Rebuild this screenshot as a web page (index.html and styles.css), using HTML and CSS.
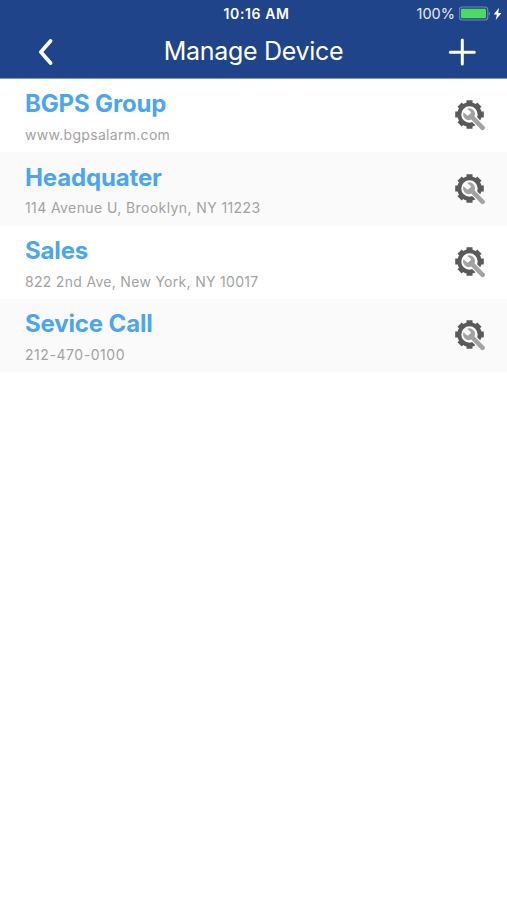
FILE: index.html
```html
<!DOCTYPE html>
<html lang="en">
<head>
  <meta charset="UTF-8">
  <title>Manage Device</title>
  <link rel="stylesheet" href="styles.css">
</head>
<body>
  <!-- shared gear + wrench icon -->
  <svg class="defs" width="0" height="0">
    <symbol id="settings" viewBox="0 0 32 32">
      <circle cx="15.5" cy="15.5" r="10.2" fill="none" stroke="#5a5a5a" stroke-width="4"/>
      <g stroke="#5a5a5a" stroke-width="6" stroke-linejoin="round">
        <path d="M15.5 1.2v4M15.5 25.8v4M1.2 15.5h4M25.8 15.5h4"/>
        <path d="M5.6 5.6l2.8 2.8M22.6 22.6l2.8 2.8M5.6 25.4l2.8-2.8M22.6 8.4l2.8-2.8"/>
      </g>
      <path d="M19.5 19.5L30 30" stroke="#fff" stroke-width="6.8"/>
      <path d="M17 17L28.6 28.8" stroke="#a2a2a2" stroke-width="4.6" stroke-linecap="round"/>
      <path d="M13.1 9.7a5.7 5.7 0 0 1 7.4 7.5l-3.4 3.4a5.7 5.7 0 0 1-7.6-7.3l3.7 3.3 3.3-.5.4-3.1z" fill="#a2a2a2"/>
    </symbol>
  </svg>

  <header class="header">
    <div class="status">
      <span class="time">10:16 AM</span>
      <div class="power">
        <span class="percent">100%</span>
        <svg class="battery" width="33" height="16" viewBox="0 0 33 16">
          <rect x=".2" y="1" width="28.6" height="13" rx="3" fill="none" stroke="#7189b9" stroke-width="1.2"/>
          <rect x="1.8" y="2.8" width="25.2" height="9.5" rx="1.2" fill="#4cd964"/>
          <path d="M30 5.5q2 2.2 0 4.4z" fill="#7189b9"/>
        </svg>
        <svg class="bolt" width="9" height="14" viewBox="0 0 9 14">
          <path d="M6 .8L.7 7.6h3.1L2.7 13 8.4 6H5.2z" fill="#fff"/>
        </svg>
      </div>
    </div>
    <div class="navbar">
      <svg class="back" width="16" height="28" viewBox="0 0 16 28">
        <path d="M13.5 3L3.9 14l9.6 11" fill="none" stroke="#fff" stroke-width="3.7" stroke-linecap="round" stroke-linejoin="round"/>
      </svg>
      <h1 class="title">Manage Device</h1>
      <svg class="add" width="28" height="28" viewBox="0 0 28 28">
        <path d="M14.3 2v24M2.3 14.3h24" stroke="#fff" stroke-width="3" stroke-linecap="round"/>
      </svg>
    </div>
  </header>

  <ul class="devices">
    <li class="device">
      <div class="info">
        <h2 class="name">BGPS Group</h2>
        <p class="detail">www.bgpsalarm.com</p>
      </div>
      <svg class="settings"><use href="#settings"/></svg>
    </li>
    <li class="device">
      <div class="info">
        <h2 class="name">Headquater</h2>
        <p class="detail detail-wide">114 Avenue U, Brooklyn, NY 11223</p>
      </div>
      <svg class="settings"><use href="#settings"/></svg>
    </li>
    <li class="device">
      <div class="info">
        <h2 class="name">Sales</h2>
        <p class="detail">822 2nd Ave, New York, NY 10017</p>
      </div>
      <svg class="settings"><use href="#settings"/></svg>
    </li>
    <li class="device">
      <div class="info">
        <h2 class="name">Sevice Call</h2>
        <p class="detail detail-phone">212-470-0100</p>
      </div>
      <svg class="settings"><use href="#settings"/></svg>
    </li>
  </ul>
</body>
</html>
```

FILE: styles.css
```css
body {
  margin: 0;
  background-color: #fff;
  font-family: Inter, "Liberation Sans", sans-serif;
}

h1, h2, p, ul {
  margin: 0;
  padding: 0;
}

svg { display: block; }

.header {
  height: 78px;
  background-color: #1f4489;
  border-bottom: 1px solid #7f97c6;
  color: #fff;
}

.status {
  display: grid;
  grid-template-columns: 1fr auto 1fr;
  height: 27px;
  padding: 0 5px 0 11px;
  align-items: center;
}

.time {
  grid-column: 2;
  font-size: 14px;
  font-weight: 600;
  letter-spacing: 0.6px;
}

.power {
  display: flex;
  justify-content: flex-end;
  align-items: center;
}

.percent {
  font-size: 14.5px;
  margin-right: 4px;
  color: #e4eaf5;
}

.bolt { margin-left: 1px; }

.navbar {
  display: flex;
  justify-content: space-between;
  align-items: center;
  height: 50px;
  padding: 0 31px 0 37px;
}

.title {
  font-size: 25px;
  font-weight: 400;
  line-height: 30px;
  letter-spacing: -0.3px;
  padding: 0 0 3px 6px;
}

.devices { list-style: none; }

.device {
  display: flex;
  justify-content: space-between;
  height: 73.3px;
  padding: 0 21px 0 25px;
}

.device:nth-child(even) { background-color: #fafafa; }

.name {
  padding-top: 10.4px;
  font-size: 24px;
  font-weight: 650;
  line-height: 30px;
  letter-spacing: -0.15px;
  color: #4ba5ef;
}

.detail {
  padding-top: 5.6px;
  font-size: 14px;
  line-height: 20px;
  letter-spacing: 0.3px;
  color: #a2a2a2;
}

.detail-wide { letter-spacing: 0.4px; }

.detail-phone { letter-spacing: 0.55px; }

.settings {
  width: 32px;
  height: 32px;
  margin-top: 20.4px;
}
```
